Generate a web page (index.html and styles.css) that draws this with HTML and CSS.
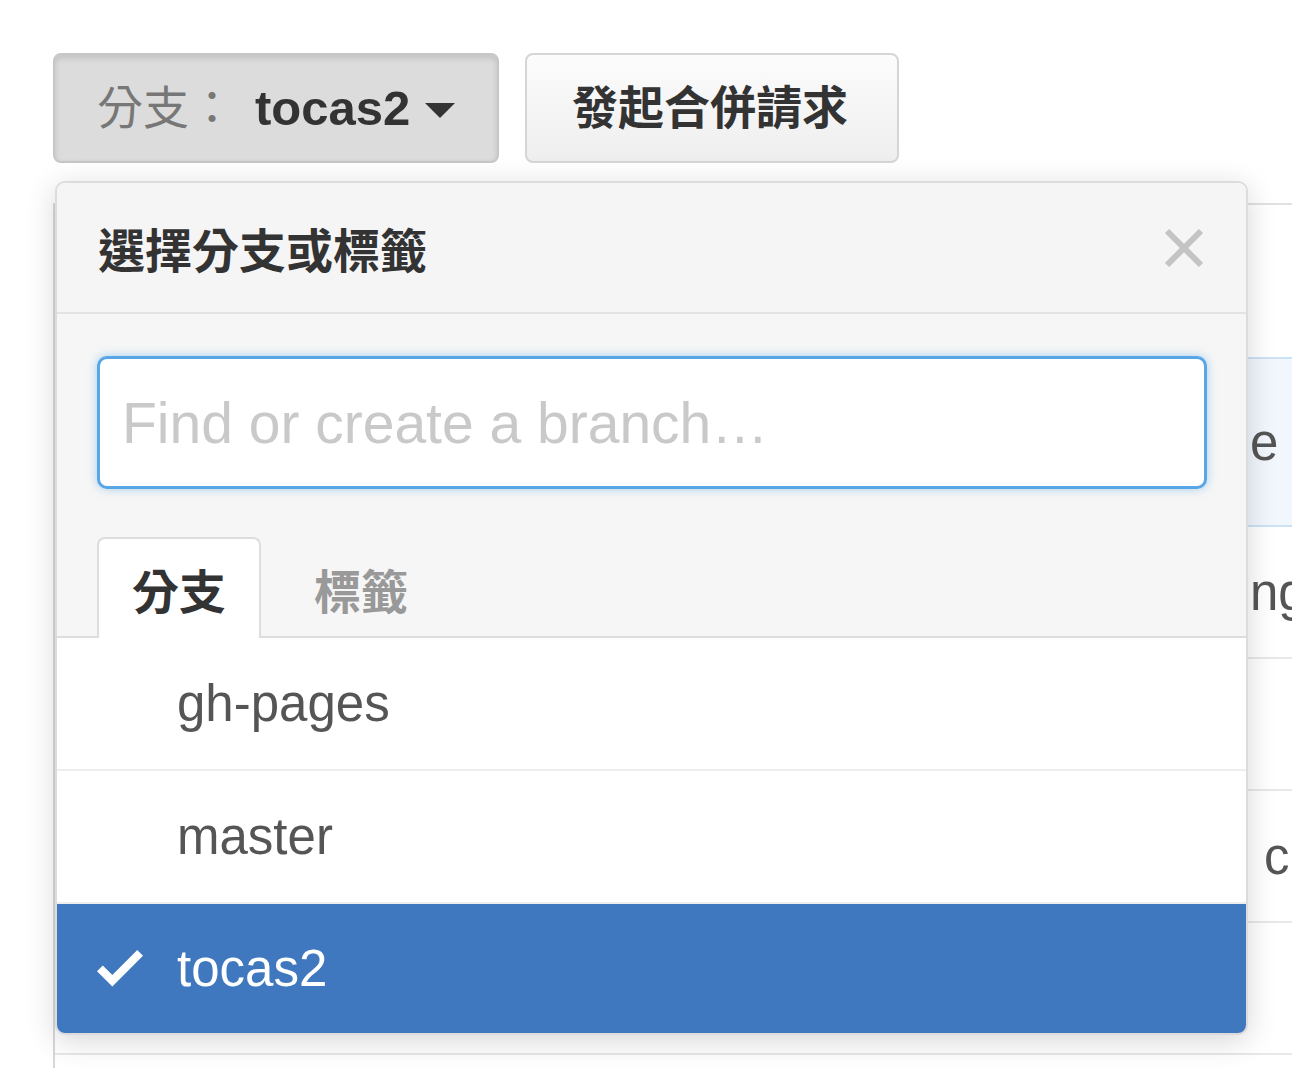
FILE: index.html
```html
<!DOCTYPE html>
<html>
  <head>
    <meta charset="utf-8" />
    <title>分支選擇</title>
    <link rel="stylesheet" href="styles.css">
  </head>

  <body>
    <div class="page">
      <div class="toolbar">
        <button class="btn btn-branch">
          <span class="btn-label">分支：</span>
          <span class="btn-ref">tocas2</span>
          <span class="caret"></span>
        </button>
        <button class="btn btn-pr">發起合併請求</button>
      </div>

      <div class="content">
        <!-- file list behind the menu -->
        <div class="repo-box">
          <div class="box-row box-head"></div>
          <div class="box-row box-tease"><span class="peek">e</span></div>
          <div class="box-row"><span class="peek">ng</span></div>
          <div class="box-row"></div>
          <div class="box-row"><span class="peek peek-c">c</span></div>
          <div class="box-row"></div>
          <div class="box-row"></div>
        </div>

        <div class="select-menu">
          <div class="menu-header">
            <span class="menu-title">選擇分支或標籤</span>
            <svg class="menu-close" width="42" height="42" viewBox="0 0 42 42">
              <path d="M4 4 L38 38 M38 4 L4 38" />
            </svg>
          </div>

          <div class="menu-filter">
            <input class="filter-input" type="text" placeholder="Find or create a branch…">
          </div>

          <div class="menu-tabs">
            <span class="tab selected">分支</span>
            <span class="tab">標籤</span>
          </div>

          <div class="menu-list">
            <div class="menu-item">
              <span class="item-check"></span>
              <span class="item-name">gh-pages</span>
            </div>
            <div class="menu-item">
              <span class="item-check"></span>
              <span class="item-name">master</span>
            </div>
            <div class="menu-item selected">
              <span class="item-check">
                <svg width="46" height="37" viewBox="0 3.5 12 9.6">
                  <path d="M12 5l-8 8-4-4 1.5-1.5L4 10l6.5-6.5L12 5z" />
                </svg>
              </span>
              <span class="item-name">tocas2</span>
            </div>
          </div>
        </div>
      </div>
    </div>
  </body>
</html>
```

FILE: styles.css
```css
* {
  margin: 0;
  padding: 0;
  box-sizing: border-box;
}

body {
  font-family: "Liberation Sans", "Noto Sans CJK TC", sans-serif;
  background-color: #fff;
  color: #333;
  overflow: hidden;
}

.page {
  padding: 53px 0 0 53px;
  height: 1068px;
  overflow: hidden;
}

.toolbar {
  display: flex;
  gap: 26px;
}

.btn {
  display: flex;
  align-items: center;
  height: 110px;
  border: 2px solid #d5d5d5;
  border-radius: 8px;
  background: linear-gradient(#fcfcfc, #eeeeee);
  font-family: "Liberation Sans", "Noto Sans CJK TC", sans-serif;
  color: #333;
  line-height: 1;
}

.btn-branch {
  width: 446px;
  padding-left: 42px;
  background: #dcdcdc;
  border-color: #c6c6c6;
  box-shadow: inset 0 3px 6px rgba(0, 0, 0, 0.12);
}

.btn-label {
  font-size: 46px;
  color: #777;
}

.btn-ref {
  margin-left: 20px;
  font-size: 49px;
  font-weight: bold;
}

.caret {
  margin-left: 15px;
  margin-top: 4px;
  border-left: 15px solid transparent;
  border-right: 15px solid transparent;
  border-top: 15px solid #333;
}

.btn-pr {
  width: 374px;
  padding-left: 45px;
  font-size: 46px;
  font-weight: bold;
}

.content {
  position: relative;
  margin-top: 40px;
}

/* the page content the menu covers */
.repo-box {
  width: 1400px;
  border-top: 2px solid #e1e1e1;
  border-left: 2px solid #d8d8d8;
}

.box-row {
  display: flex;
  align-items: center;
  height: 132px;
  padding-left: 1195px;
  border-bottom: 2px solid #e8e8e8;
  font-size: 51px;
  color: #555;
}

.box-head {
  height: 152px;
  border-bottom: none;
}

.box-tease {
  height: 170px;
  background-color: #f1f7fd;
  border-top: 2px solid #cde2f5;
  border-bottom: 2px solid #cde2f5;
}

.peek-c {
  margin-left: 14px;
}

.select-menu {
  position: absolute;
  top: -22px;
  left: 2px;
  width: 1193px;
  border: 2px solid #dcdcdc;
  border-radius: 10px;
  overflow: hidden;
  background-color: #fff;
  box-shadow: 0 6px 30px rgba(0, 0, 0, 0.16);
}

.menu-header {
  display: flex;
  align-items: center;
  justify-content: space-between;
  height: 131px;
  padding: 0 41px;
  background-color: #f5f5f5;
  border-bottom: 2px solid #e3e3e3;
}

.menu-title {
  font-size: 47px;
  font-weight: bold;
  color: #333;
}

.menu-close {
  fill: none;
  stroke: #c4c4c4;
  stroke-width: 6;
}

.menu-filter {
  padding: 42px 39px 48px 40px;
  background-color: #f6f6f6;
}

.filter-input {
  display: block;
  width: 100%;
  height: 133px;
  padding-left: 22px;
  border: 3px solid #59a6e6;
  border-radius: 10px;
  background-color: #fff;
  box-shadow: 0 0 10px rgba(81, 167, 232, 0.5);
  font-family: "Liberation Sans", sans-serif;
  font-size: 57px;
  color: #333;
  outline: none;
}

.filter-input::placeholder {
  color: #c9c9c9;
}

.menu-tabs {
  display: flex;
  gap: 18px;
  height: 101px;
  padding-left: 40px;
  background-color: #f6f6f6;
  border-bottom: 2px solid #dddddd;
}

.tab {
  display: flex;
  align-items: center;
  height: 101px;
  padding: 0 33px;
  border: 2px solid transparent;
  border-bottom: none;
  border-radius: 8px 8px 0 0;
  font-size: 47px;
  font-weight: bold;
  color: #999;
}

.tab.selected {
  background-color: #fff;
  border-color: #dddddd;
  color: #333;
}

.menu-item {
  display: flex;
  align-items: center;
  height: 133px;
  padding-left: 40px;
  border-bottom: 2px solid #eeeeee;
  font-size: 51px;
  color: #555;
}

.menu-item.selected {
  height: 129px;
  border-bottom: none;
  background-color: #4078c0;
  color: #fff;
}

.item-check {
  display: flex;
  align-items: center;
  width: 80px;
}

.item-check svg {
  fill: #fff;
}
```
